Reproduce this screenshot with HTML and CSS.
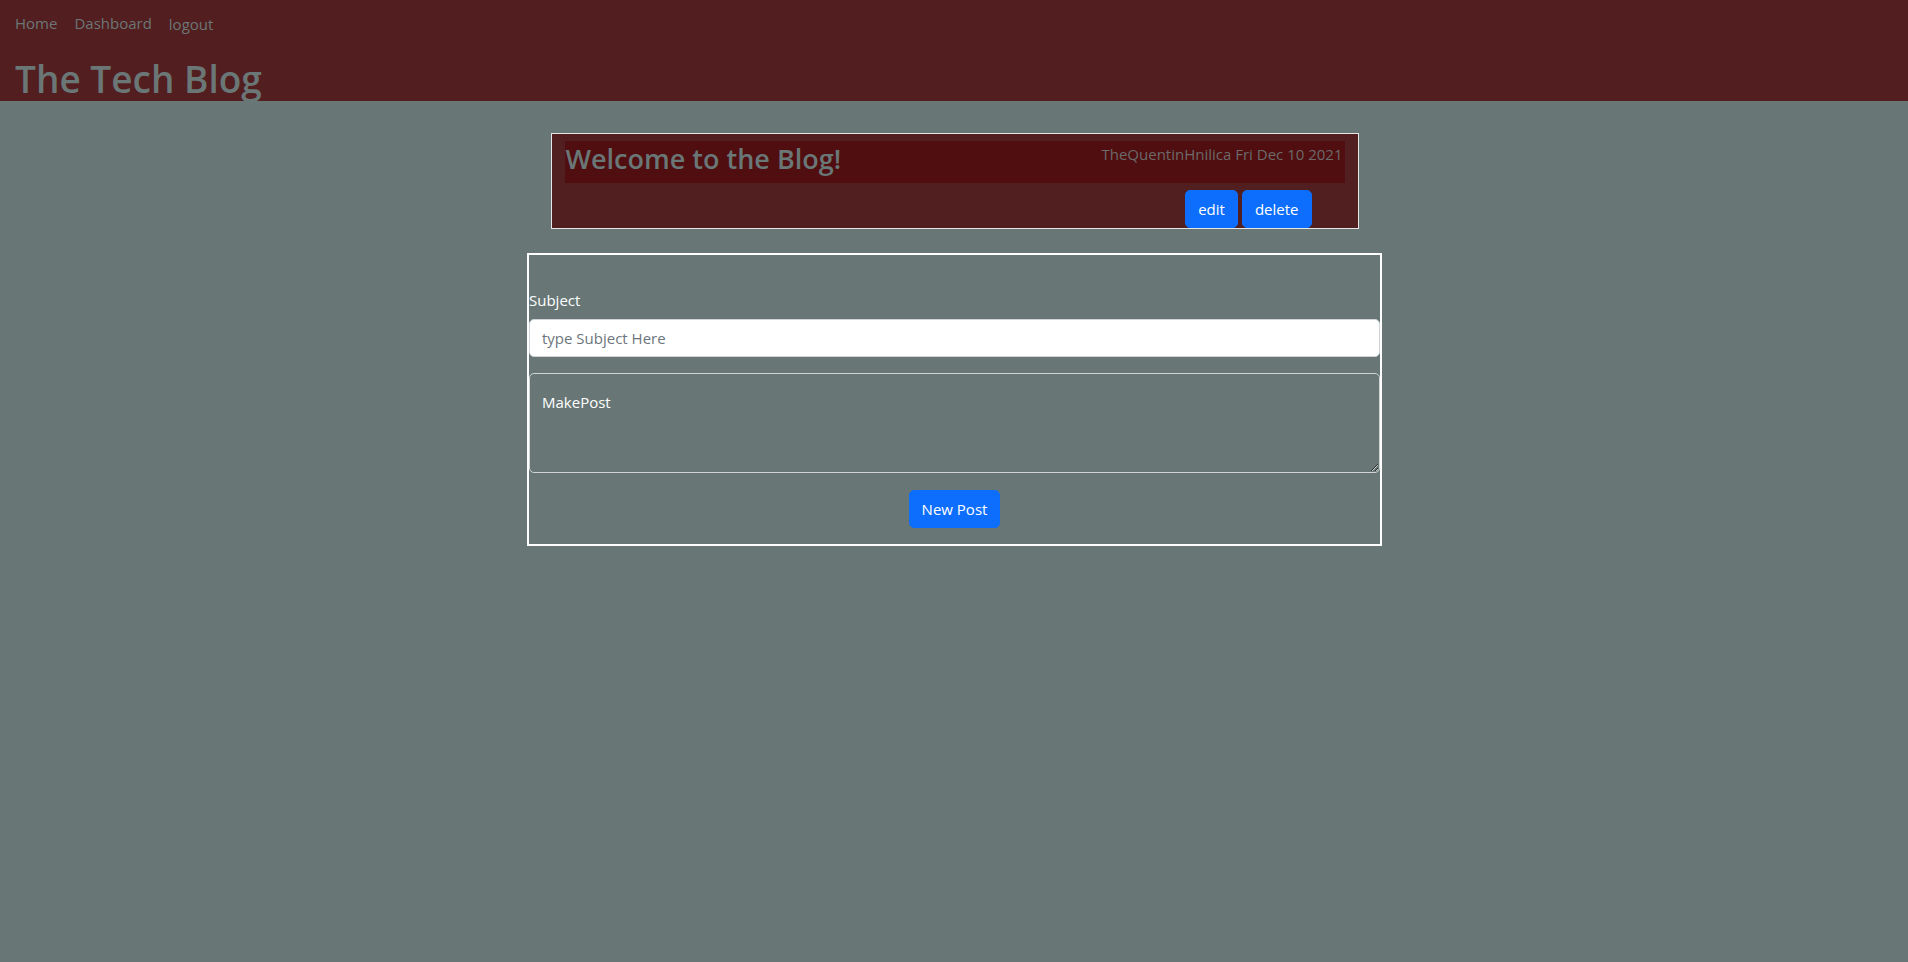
FILE: index.html
```html
<!DOCTYPE html>
<html lang="en">
<head>
<meta charset="utf-8">
<title>The Tech Blog</title>
<link rel="stylesheet" href="styles.css">
</head>
<body>
<header class="site-header">
  <nav class="nav">
    <a class="nav-link" href="#">Home</a>
    <a class="nav-link" href="#">Dashboard</a>
    <a class="nav-link logout" href="#">logout</a>
  </nav>
  <h1 class="site-title">The Tech Blog</h1>
</header>
<main class="main">
  <article class="post-card">
    <div class="post-head">
      <h2 class="post-title">Welcome to the Blog!</h2>
      <span class="post-meta">TheQuentinHnilica Fri Dec 10 2021</span>
    </div>
    <div class="post-actions">
      <button class="btn" type="button">edit</button>
      <button class="btn" type="button">delete</button>
    </div>
  </article>
  <form class="post-form">
    <label class="form-label" for="subject">Subject</label>
    <input class="form-input" id="subject" type="text" placeholder="type Subject Here">
    <textarea class="form-textarea" rows="3">MakePost</textarea>
    <div class="form-actions">
      <button class="btn" type="button">New Post</button>
    </div>
  </form>
</main>
</body>
</html>
```
FILE: styles.css
```css
* { box-sizing: border-box; }
html, body {
  margin: 0;
  padding: 0;
  background: #687776;
  font-family: "Open Sans", "Noto Sans", sans-serif;
  font-size: 16px;
  line-height: 1.5;
  min-height: 100%;
}
body { height: 962px; }
.site-header {
  background: #521e20;
  padding: 12px 15px 0;
  height: 101px;
}
.nav {
  display: flex;
  gap: 17px;
  height: 24px;
}
.nav-link {
  color: #6b7776;
  text-decoration: none;
  font-size: 15px;
}
.logout { position: relative; top: 1px; }
.site-title {
  margin: 23px 0 0;
  font-size: 37px;
  font-weight: 600;
  line-height: 40px;
  color: #6b7776;
}
.main {
  display: flex;
  flex-direction: column;
  align-items: center;
  padding-top: 32px;
  padding-left: 1px;
}
.post-card {
  width: 808px;
  height: 96px;
  background: #521f20;
  border: 1px solid #e6e6e6;
  padding: 7px 13px 0;
}
.post-head {
  background: #500e10;
  height: 42px;
  display: flex;
  justify-content: space-between;
  align-items: flex-start;
}
.post-title {
  margin: 0;
  padding-left: 1px;
  font-size: 27px;
  font-weight: 600;
  line-height: 36px;
  color: #6a7777;
}
.post-meta {
  color: #6c6a6a;
  font-size: 15px;
  line-height: 20px;
  padding-top: 3px;
  padding-right: 2px;
}
.post-actions {
  display: flex;
  gap: 4px;
  justify-content: flex-end;
  padding-right: 33px;
  margin-top: 7px;
}
.btn {
  background: #0d6efd;
  color: #fff;
  border: 1px solid #0d6efd;
  border-radius: 5px;
  padding: 6px 12px;
  font-family: inherit;
  font-size: 15px;
  line-height: 24px;
  height: 38px;
  cursor: pointer;
}
.post-form {
  margin-top: 24px;
  width: 855px;
  border: 2px solid #fff;
  padding: 33px 0 16px;
  display: flex;
  flex-direction: column;
}
.form-label {
  color: #fff;
  font-size: 15px;
  line-height: 24px;
  margin-bottom: 7px;
}
.form-input {
  width: 100%;
  height: 38px;
  background: #fff;
  border: 1px solid #ced4da;
  border-radius: 5px;
  padding: 6px 12px;
  font-family: inherit;
  font-size: 15px;
  color: #212529;
}
.form-input::placeholder { color: #6c757d; }
.form-textarea {
  width: 100%;
  height: 100px;
  margin-top: 16px;
  background: transparent;
  border: 1px solid #cfd4d4;
  border-radius: 5px;
  padding: 16px 12px 8px;
  font-family: inherit;
  font-size: 15px;
  line-height: 24px;
  color: #fff;
  resize: vertical;
}
.form-actions {
  display: flex;
  justify-content: center;
  margin-top: 17px;
}
```
